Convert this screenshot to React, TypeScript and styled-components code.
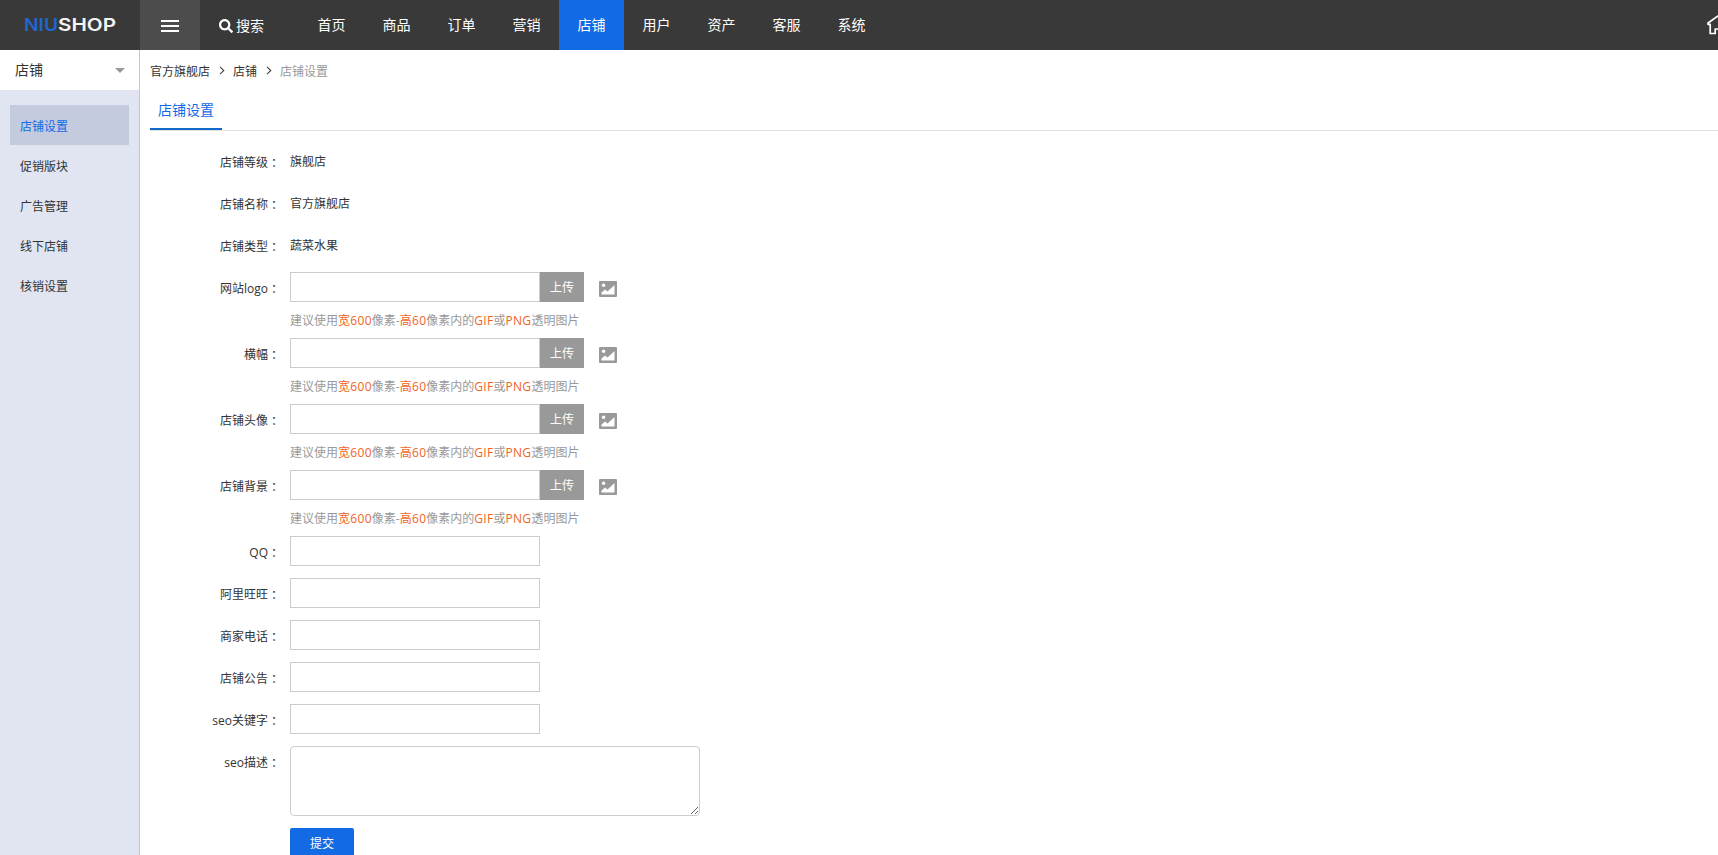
import React from 'react';
import styled, { createGlobalStyle, css } from 'styled-components';
import { FaSearch } from 'react-icons/fa';

const GlobalStyle = createGlobalStyle`
  * { box-sizing: border-box; }
  html, body { margin: 0; padding: 0; overflow: hidden; background: #fff; }
  body, input, textarea, button {
    font-family: 'Open Sans', 'Noto Sans CJK SC', sans-serif;
    font-size: 12px;
    color: #333;
  }
`;

const Page = styled.div`
  display: flex;
  flex-direction: column;
  height: 855px;
  overflow: hidden;
`;

const Header = styled.header`
  display: flex;
  flex: none;
  height: 50px;
  background: #393939;
  color: #fff;
  overflow: hidden;
`;

const Logo = styled.div`
  width: 140px;
  height: 50px;
  flex: none;
`;

const MenuToggle = styled.div`
  display: flex;
  flex-direction: column;
  justify-content: center;
  align-items: center;
  gap: 3px;
  width: 60px;
  padding-top: 2px;
  background: #4c4c4c;
`;

const Bar = styled.span`
  width: 18px;
  height: 2px;
  background: #fff;
`;

const Search = styled.div`
  display: flex;
  align-items: center;
  gap: 3px;
  width: 99px;
  padding: 0 0 1px 19px;
  font-size: 14px;

  svg {
    margin-top: 3px;
  }
`;

const Nav = styled.nav`
  display: flex;
`;

const NavItem = styled.a<{ $active?: boolean }>`
  width: 65px;
  text-align: center;
  font-size: 14px;
  line-height: 50px;
  background: ${(p) => (p.$active ? '#126ae4' : 'transparent')};
`;

const HomeLink = styled.a`
  display: flex;
  align-items: center;
  margin: 0 -11px 0 auto;
`;

const Body = styled.div`
  display: flex;
  flex: 1;
  min-height: 0;
`;

const Sidebar = styled.aside`
  flex: none;
  width: 140px;
  background: #e0e5f1;
  border-right: 1px solid #c3c7d3;
`;

const SidebarHead = styled.div`
  display: flex;
  align-items: center;
  justify-content: space-between;
  height: 40px;
  padding: 0 14px 2px 15px;
  background: #fff;
  font-size: 14px;
`;

const Caret = styled.span`
  margin-top: 3px;
  border: 5px solid transparent;
  border-top-color: #999;
  border-bottom: 0;
`;

const Menu = styled.div`
  padding: 15px 10px;
`;

const MenuItem = styled.div<{ $active?: boolean }>`
  height: 40px;
  line-height: 43px;
  padding-left: 10px;
  ${(p) => p.$active && css`
    background: #c4cbdf;
    color: #126ae4;
  `}
`;

const Main = styled.main`
  flex: 1;
  padding-left: 10px;
`;

const Breadcrumb = styled.div`
  display: flex;
  align-items: center;
  height: 41px;
  color: #333;
`;

const Current = styled.span`
  color: #999;
`;

const Chevron = styled.svg`
  width: 6px;
  height: 9px;
  margin: 0 8px 0 9px;
`;

const Tabs = styled.div`
  display: flex;
  height: 40px;
  border-bottom: 1px solid #e1e1e1;
`;

const Tab = styled.div`
  height: 39px;
  padding: 0 8px;
  line-height: 37px;
  font-size: 14px;
  color: #126ae4;
  border-bottom: 2px solid #126ac8;
`;

const Form = styled.form`
  padding-top: 15px;
`;

const Row = styled.div<{ $hint?: boolean; $tall?: boolean }>`
  display: flex;
  align-items: flex-start;
  height: ${(p) => (p.$hint ? 66 : p.$tall ? 82 : 42)}px;
`;

const Label = styled.label`
  width: 130px;
  margin-right: 10px;
  text-align: right;
  line-height: 33px;
`;

const Colon = styled.span`
  font-family: 'Noto Sans CJK TC', sans-serif;
  line-height: 1;
  vertical-align: -1px;
`;

const Value = styled.span`
  line-height: 31px;
`;

const Field = styled.div`
  display: flex;
  flex-direction: column;
`;

const UploadLine = styled.div`
  display: flex;
  height: 30px;
`;

const Input = styled.input`
  width: 250px;
  height: 30px;
  padding: 0 6px;
  border: 1px solid #ccc;
  border-radius: 0;
  outline: none;
`;

const UploadButton = styled.button`
  width: 44px;
  height: 30px;
  padding: 0;
  border: 0;
  background: #999;
  color: #fff;
  margin-right: 15px;
`;

const Thumb = styled.svg`
  width: 18px;
  height: 16px;
  margin-top: 9px;
`;

const Hint = styled.div`
  line-height: 38px;
  color: #999;
  white-space: nowrap;
`;

const Accent = styled.span`
  color: #f0641e;
  letter-spacing: 0.3px;
`;

const TextArea = styled.textarea`
  width: 410px;
  height: 70px;
  border: 1px solid #ccc;
  border-radius: 4px;
  outline: none;
`;

const Submit = styled.button`
  width: 64px;
  height: 30px;
  margin-left: 140px;
  padding: 0;
  border: 0;
  border-radius: 2px;
  background: #126ae4;
  color: #fff;
`;

const navItems = ['首页', '商品', '订单', '营销', '店铺', '用户', '资产', '客服', '系统'];
const menuItems = ['店铺设置', '促销版块', '广告管理', '线下店铺', '核销设置'];
const infoRows = [['店铺等级', '旗舰店'], ['店铺名称', '官方旗舰店'], ['店铺类型', '蔬菜水果']];
const uploadRows = ['网站logo', '横幅', '店铺头像', '店铺背景'];
const inputRows = ['QQ', '阿里旺旺', '商家电话', '店铺公告', 'seo关键字'];

const Separator = () => (
  <Chevron viewBox="0 0 6 9">
    <path d="M1 0.8 L4.8 4.5 L1 8.2" fill="none" stroke="#444" strokeWidth="1.1" />
  </Chevron>
);

const FieldLabel = ({ text }: { text: string }) => (
  <Label>{text}<Colon>：</Colon></Label>
);

export default function App() {
  return (
    <Page>
      <GlobalStyle />
      <Header>
        <Logo>
          <svg width="140" height="50" fontFamily="Inter, sans-serif" fontSize="17.5" fontWeight="600">
            <text x="24" y="31" fill="#1f66d0" textLength="34" lengthAdjust="spacingAndGlyphs">NIU</text>
            <text x="58" y="31" fill="#f4f4f4" textLength="58" lengthAdjust="spacingAndGlyphs">SHOP</text>
          </svg>
        </Logo>
        <MenuToggle><Bar /><Bar /><Bar /></MenuToggle>
        <Search><FaSearch size={14} />搜索</Search>
        <Nav>
          {navItems.map((t) => <NavItem key={t} $active={t === '店铺'}>{t}</NavItem>)}
        </Nav>
        <HomeLink>
          <svg width="22" height="20" viewBox="0 0 22 20" fill="none" stroke="#fff" strokeWidth="1.7" strokeLinejoin="round">
            <path d="M3.2 9.3 L1 9.3 L1 8 L11 1 L21 8 L21 9.3 L18.8 9.3 L18.8 18.5 L13.8 18.5 L13.8 14 L8.2 14 L8.2 18.5 L3.2 18.5 Z" />
          </svg>
        </HomeLink>
      </Header>
      <Body>
        <Sidebar>
          <SidebarHead>店铺<Caret /></SidebarHead>
          <Menu>
            {menuItems.map((t, i) => <MenuItem key={t} $active={i === 0}>{t}</MenuItem>)}
          </Menu>
        </Sidebar>
        <Main>
          <Breadcrumb>
            <span>官方旗舰店</span><Separator /><span>店铺</span><Separator /><Current>店铺设置</Current>
          </Breadcrumb>
          <Tabs><Tab>店铺设置</Tab></Tabs>
          <Form>
            {infoRows.map(([label, value]) => (
              <Row key={label}><FieldLabel text={label} /><Value>{value}</Value></Row>
            ))}
            {uploadRows.map((label) => (
              <Row key={label} $hint>
                <FieldLabel text={label} />
                <Field>
                  <UploadLine>
                    <Input />
                    <UploadButton type="button">上传</UploadButton>
                    <Thumb viewBox="0 0 18 16">
                      <rect width="18" height="16" rx="1" fill="#999" />
                      <circle cx="4.6" cy="4.2" r="1.7" fill="#fff" />
                      <path d="M2.5 13.5 V11.5 L6 8.5 L8.5 10.5 L15.5 4 V13.5 Z" fill="#fff" />
                    </Thumb>
                  </UploadLine>
                  <Hint>
                    建议使用<Accent>宽600</Accent>像素-<Accent>高60</Accent>像素内的<Accent>GIF</Accent>或<Accent>PNG</Accent>透明图片
                  </Hint>
                </Field>
              </Row>
            ))}
            {inputRows.map((label) => (
              <Row key={label}><FieldLabel text={label} /><Input /></Row>
            ))}
            <Row $tall><FieldLabel text="seo描述" /><TextArea /></Row>
            <Submit type="button">提交</Submit>
          </Form>
        </Main>
      </Body>
    </Page>
  );
}
